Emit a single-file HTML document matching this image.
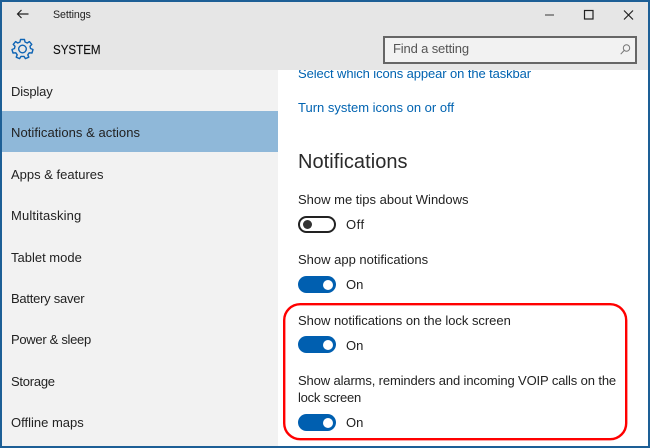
<!DOCTYPE html>
<html><head><meta charset="utf-8">
<style>
html,body{margin:0;padding:0}
body{width:650px;height:448px;position:relative;overflow:hidden;background:#fff;font-family:"Liberation Sans",sans-serif;color:#222}
div{position:absolute;white-space:nowrap}
.t{font-size:13px;line-height:16px;color:#222}
.n{left:11px}
.sw{left:298px;width:38px;height:17px;border-radius:9px;background:#005fb0}
.sw:after{content:"";position:absolute;left:25px;top:3.5px;width:10px;height:10px;border-radius:50%;background:#fff}
.off{left:298px;width:34px;height:13px;border:2px solid #222;border-radius:9px;background:#fff}
.off:after{content:"";position:absolute;left:3px;top:1.5px;width:9px;height:9px;border-radius:50%;background:#333}
.l{left:346px}
</style></head><body>
<div style="left:0;top:0;width:650px;height:70px;background:#e6e6e6"></div>
<div style="left:0;top:70px;width:278px;height:378px;background:#f2f2f2"></div>
<div style="left:0;top:111px;width:278px;height:41px;background:#8fb8d9"></div>

<svg style="position:absolute;left:16px;top:8px" width="14" height="14" viewBox="0 0 14 14" fill="none" stroke="#222" stroke-width="1.2"><path d="M1.5 6H12.5M5.5 2L1.5 6L5.5 10"/></svg>
<div class="t" style="left:53px;top:7px;font-size:11px;letter-spacing:-.1px;transform:scaleX(.97);transform-origin:0 0">Settings</div>
<svg style="position:absolute;left:11px;top:37px" width="23" height="23" viewBox="0 0 23 23" fill="none" stroke="#0f64b4" stroke-width="1.4" stroke-linejoin="round"><path d="M9.5 2.5H13.5L14 5L16.2 6L18.4 4.6L20.8 7.4L19 9.2L19.5 11.5L22 12.5L21 16L18.2 15.8L16.8 17.8L17.8 20.2L14.4 21.6L13 19.4H10L8.6 21.6L5.2 20.2L6.2 17.8L4.8 15.8L2 16L1 12.5L3.5 11.5L4 9.2L2.2 7.4L4.6 4.6L6.8 6L9 5Z"/><circle cx="11.5" cy="12" r="3.8"/></svg>
<div class="t" style="left:53px;top:42px;font-size:13px;color:#111;-webkit-text-stroke:.15px #111;transform:scaleX(.89);transform-origin:0 0">SYSTEM</div>

<svg style="position:absolute;left:540px;top:8px" width="100" height="14" viewBox="0 0 100 14" fill="none" stroke="#222" stroke-width="1.2"><path d="M5 7H14" stroke="#555"/><rect x="44.5" y="2.5" width="8.5" height="8.5"/><path d="M84 2.5L93 11.5M93 2.5L84 11.5"/></svg>

<div style="left:383px;top:36px;width:250px;height:24px;border:2px solid #666;background:#f2f2f2"></div>
<div class="t" style="left:393px;top:41px;color:#555;letter-spacing:-.15px">Find a setting</div>
<svg style="position:absolute;left:620px;top:44px" width="11" height="11" viewBox="0 0 11 11" fill="none" stroke="#777" stroke-width="1"><circle cx="6.5" cy="4" r="3.2"/><path d="M4.2 6.4L.7 10.2"/></svg>

<div class="t n" style="top:84px;letter-spacing:-.15px">Display</div>
<div class="t n" style="top:125px;letter-spacing:.05px">Notifications &amp; actions</div>
<div class="t n" style="top:167px">Apps &amp; features</div>
<div class="t n" style="top:208px;letter-spacing:.15px">Multitasking</div>
<div class="t n" style="top:250px">Tablet mode</div>
<div class="t n" style="top:291px;letter-spacing:-.25px">Battery saver</div>
<div class="t n" style="top:332px;letter-spacing:-.3px">Power &amp; sleep</div>
<div class="t n" style="top:374px;letter-spacing:-.25px">Storage</div>
<div class="t n" style="top:415px">Offline maps</div>

<div class="t" style="left:298px;top:66px;color:#0063b1;clip-path:inset(4px 0 0 0);letter-spacing:-.1px">Select which icons appear on the taskbar</div>
<div class="t" style="left:298px;top:100px;color:#0063b1">Turn system icons on or off</div>
<div style="left:298px;top:149px;font-size:20px;line-height:26px;color:#2a2a2a;letter-spacing:.05px">Notifications</div>

<div class="t" style="left:298px;top:192px">Show me tips about Windows</div>
<div class="off" style="top:216px"></div>
<div class="t l" style="top:217px;letter-spacing:.5px">Off</div>

<div class="t" style="left:298px;top:252px">Show app notifications</div>
<div class="sw" style="top:276px"></div>
<div class="t l" style="top:277px">On</div>

<div class="t" style="left:298px;top:313px;letter-spacing:-.03px">Show notifications on the lock screen</div>
<div class="sw" style="top:336px"></div>
<div class="t l" style="top:338px">On</div>

<div class="t" style="left:298px;top:373px;letter-spacing:-.13px">Show alarms, reminders and incoming VOIP calls on the</div>
<div class="t" style="left:298px;top:390px;letter-spacing:-.25px">lock screen</div>
<div class="sw" style="top:414px"></div>
<div class="t l" style="top:415px">On</div>

<svg style="position:absolute;left:280px;top:300px" width="350" height="143" viewBox="0 0 350 143" fill="none"><rect x="4.2" y="4.2" width="342" height="135" rx="16" stroke="#f00" stroke-width="2.4"/></svg>

<div style="left:0;top:0;width:650px;height:2px;background:#1d5f96"></div>
<div style="left:0;top:0;width:2px;height:448px;background:#1d5f96"></div>
<div style="left:648px;top:0;width:2px;height:448px;background:#1d5f96"></div>
<div style="left:0;top:446px;width:650px;height:2px;background:#1d5f96"></div>
</body></html>
